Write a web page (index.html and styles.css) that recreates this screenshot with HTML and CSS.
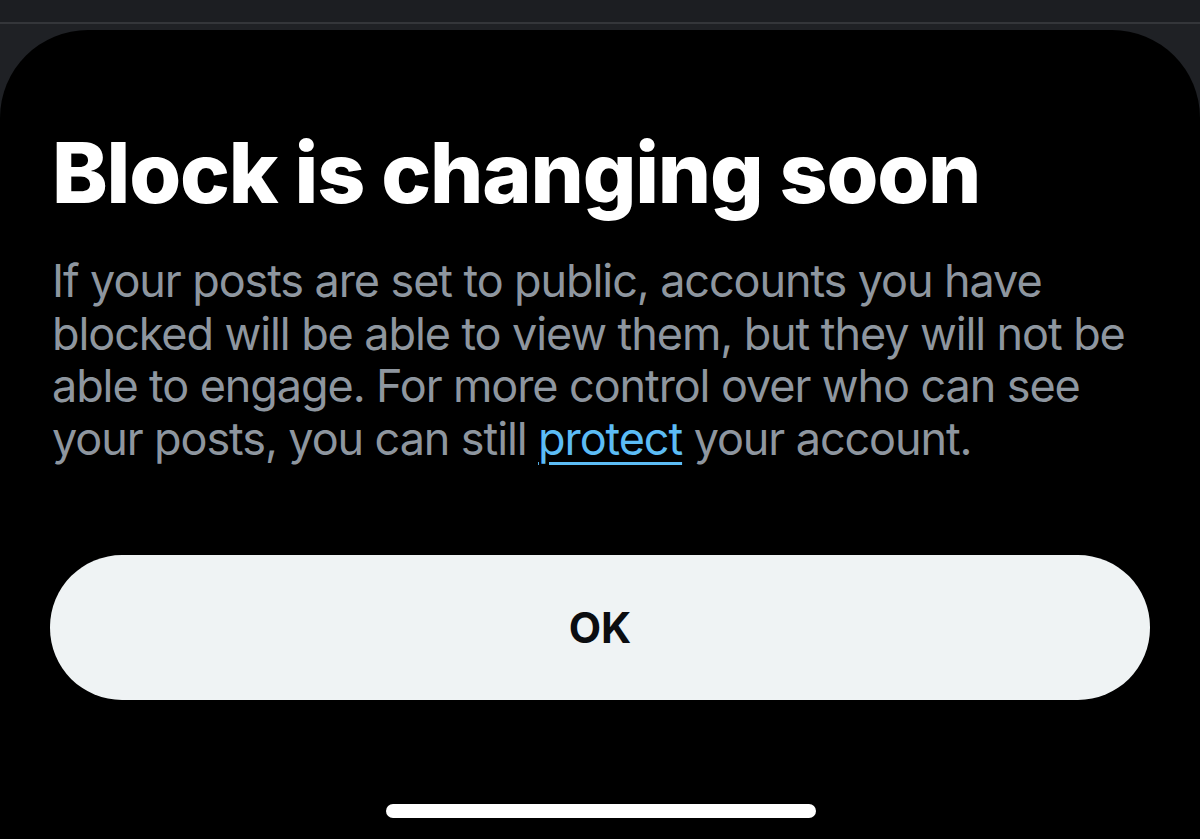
FILE: index.html
```html
<!DOCTYPE html>
<html lang="en">
<head>
<meta charset="utf-8">
<title>Block is changing soon</title>
<link rel="stylesheet" href="styles.css">
</head>
<body>
<div class="topbar"></div>
<div class="backdrop">
  <main class="sheet">
    <h1 class="title">Block is changing soon</h1>
    <p class="desc">If your posts are set to public, accounts you have<br>blocked will be able to view them, but they will not be<br>able to engage. For more control over who can see<br>your posts, you can still <a class="link" href="#">protect</a> your account.</p>
    <button class="ok-btn" type="button">OK</button>
    <div class="home-indicator"></div>
  </main>
</div>
</body>
</html>
```
FILE: styles.css
```css
html, body {
  margin: 0;
  padding: 0;
  height: 100%;
}
body {
  background: #1f2125;
  font-family: Inter, "Liberation Sans", Arial, sans-serif;
  display: flex;
  flex-direction: column;
  overflow: hidden;
}
.topbar {
  height: 22px;
  background: #1c1e22;
  border-bottom: 2px solid #34363a;
  flex: none;
}
.backdrop {
  flex: 1;
  padding-top: 6px;
  display: flex;
  flex-direction: column;
  min-height: 0;
}
.sheet {
  flex: 1;
  background: #000;
  border-radius: 88px 88px 0 0;
  padding: 0 50px 0 52px;
  display: flex;
  flex-direction: column;
  min-height: 0;
}
.title {
  margin: 93px 0 0;
  font-size: 84px;
  line-height: 100px;
  font-weight: 800;
  color: #fff;
  letter-spacing: -1.2px;
  white-space: nowrap;
}
.desc {
  margin: 32px 0 0;
  font-size: 45px;
  line-height: 52.5px;
  color: #8e969f;
  font-weight: 400;
  letter-spacing: -1.1px;
  white-space: nowrap;
}
.link {
  color: #5cbcf5;
  text-decoration: underline;
  text-decoration-thickness: 3px;
  text-underline-offset: 7px;
}
.ok-btn {
  margin: 90px 0 0 -2px;
  height: 145px;
  width: 1100px;
  flex: none;
  border: none;
  border-radius: 72px;
  background: #eff3f4;
  color: #0b0d10;
  font-family: inherit;
  font-size: 42px;
  font-weight: 700;
  cursor: pointer;
}
.home-indicator {
  margin: 104px auto 0;
  width: 430px;
  height: 14px;
  flex: none;
  border-radius: 7px;
  background: #fff;
}
```
